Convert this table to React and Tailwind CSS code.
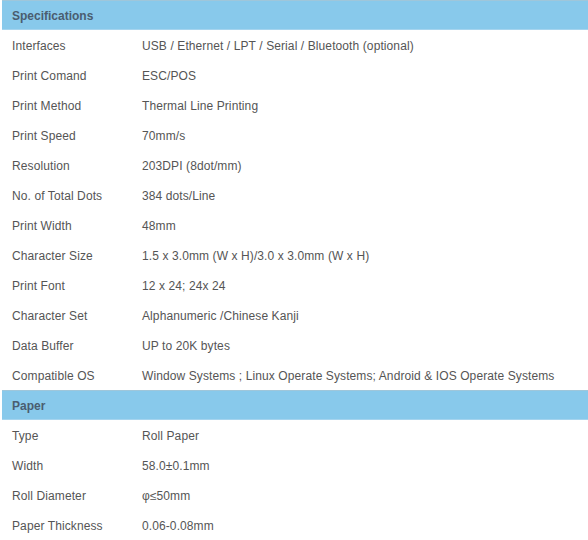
import React from "react";

const specs = [
  ["Interfaces", "USB / Ethernet / LPT / Serial / Bluetooth (optional)"],
  ["Print Comand", "ESC/POS"],
  ["Print Method", "Thermal Line Printing"],
  ["Print Speed", "70mm/s"],
  ["Resolution", "203DPI (8dot/mm)"],
  ["No. of Total Dots", "384 dots/Line"],
  ["Print Width", "48mm"],
  ["Character Size", "1.5 x 3.0mm (W x H)/3.0 x 3.0mm (W x H)"],
  ["Print Font", "12 x 24; 24x 24"],
  ["Character Set", "Alphanumeric /Chinese Kanji"],
  ["Data Buffer", "UP to 20K bytes"],
  ["Compatible OS", "Window Systems ; Linux Operate Systems; Android & IOS Operate Systems"],
];

const paper = [
  ["Type", "Roll Paper"],
  ["Width", "58.0±0.1mm"],
  ["Roll Diameter", "φ≤50mm"],
  ["Paper Thickness", "0.06-0.08mm"],
];

function Header({ title }) {
  return (
    <div className="h-[30px] ml-[2px] pt-[2px] flex items-center bg-[#88c9eb] border-t border-[#9fc6da] border-b border-b-[#a6d4ee] px-[10px]">
      <span className="font-bold text-[12px] text-[#4a5d70]">{title}</span>
    </div>
  );
}

function Row({ label, value }) {
  return (
    <div className="h-[30px] pt-[2px] flex items-center px-[12px] text-[12px] tracking-[0.1px] text-[#555]">
      <div className="w-[130px] shrink-0">{label}</div>
      <div>{value}</div>
    </div>
  );
}

export default function App() {
  return (
    <div className="w-[588px] h-[540px] bg-white overflow-hidden font-['Liberation_Sans',Arial,sans-serif]">
      <Header title="Specifications" />
      {specs.map(([l, v]) => (
        <Row key={l} label={l} value={v} />
      ))}
      <Header title="Paper" />
      {paper.map(([l, v]) => (
        <Row key={l} label={l} value={v} />
      ))}
    </div>
  );
}
